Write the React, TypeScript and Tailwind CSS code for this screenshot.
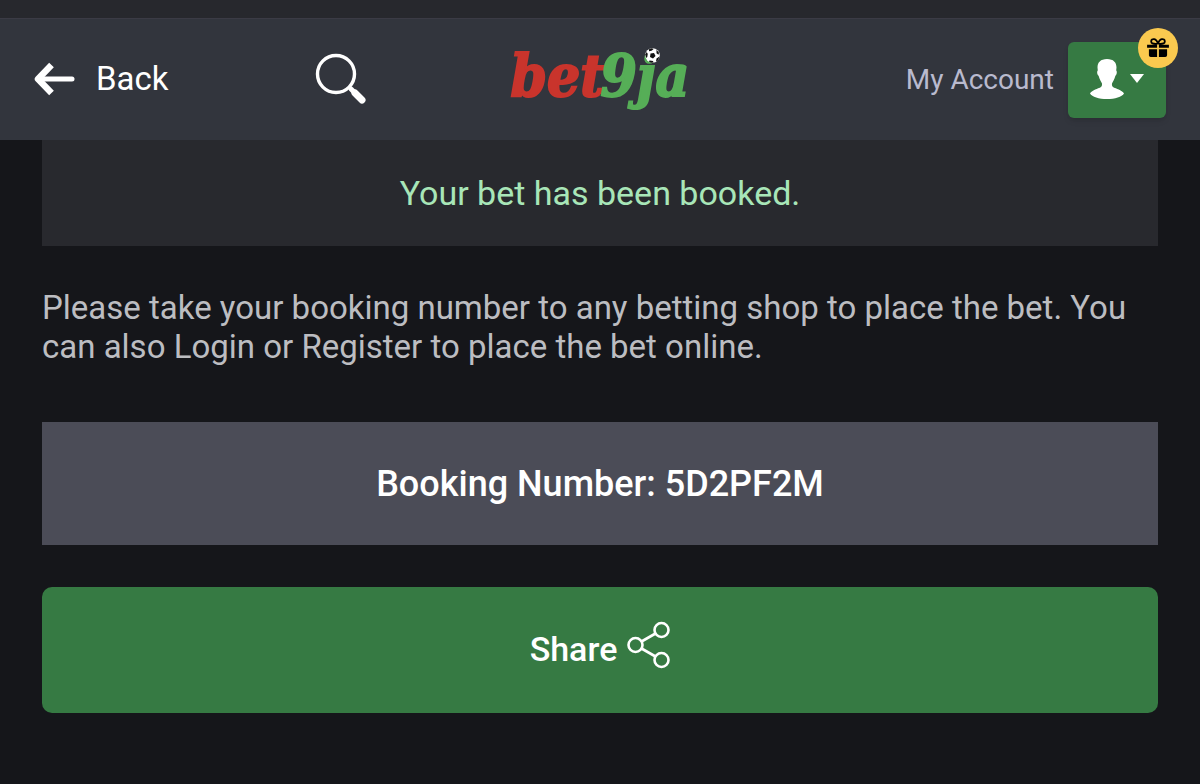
const BackArrow = () => (
  <svg width="42" height="36" viewBox="0 0 42 36" fill="none" stroke="#fff" strokeLinecap="round" strokeLinejoin="round" aria-hidden="true">
    <path d="M17.500 4 4 18l13.500 14" strokeWidth="6.500" strokeLinecap="butt" />
    <path d="M6 18h32" strokeWidth="5" />
  </svg>
)

const SearchIcon = () => (
  <svg width="52" height="52" viewBox="0 0 52 52" fill="none" stroke="#fff" strokeLinecap="round" aria-hidden="true">
    <circle cx="21" cy="21" r="18.500" strokeWidth="3.400" />
    <path d="M36 36l3 3" strokeWidth="5" />
    <path d="M40 40l7 7" strokeWidth="7" />
  </svg>
)

const Football = () => (
  <svg width="15" height="15" viewBox="0 0 30 30" aria-hidden="true">
    <circle cx="15" cy="15" r="14.500" fill="#fff" />
    <g fill="#111">
      <path d="M11 11l7-1 3 6-5 5-6-3z" />
      <path d="M8 2.500 14 .5l3 2-4 3-5 1z" />
      <path d="M23 3.500l5 6-1 4-4-3z" />
      <path d="M29 17l-3 8-4 2 1-6z" />
      <path d="M9 25l7 1 1 3-5 .5-4-2z" />
      <path d="M.5 13l3-5 2 4-1 6-2 2z" />
    </g>
  </svg>
)

const UserIcon = () => (
  <svg width="34" height="40" viewBox="0 0 34 40" fill="#fff" aria-hidden="true">
    <path d="M17 0c6.500 0 9.500 3.500 9.500 8.500l-.3 3c1 .6.8 4-.8 5.300C24.600 20.500 22.500 23 22 24.500c-.3 2 .2 3.300 2.200 4.200 4.300 1.600 8.300 3 9.800 5.800C32 38 25 40 17 40S2 38 0 34.500c1.500-2.800 5.500-4.200 9.800-5.800 2-.9 2.500-2.200 2.200-4.200-.5-1.500-2.600-4-3.400-7.700-1.600-1.300-1.800-4.700-.8-5.300l-.3-3C7.500 3.500 10.500 0 17 0z" />
  </svg>
)

const GiftIcon = () => (
  <svg width="22" height="20" viewBox="0 0 24 22" aria-hidden="true">
    <g fill="none" stroke="#000" strokeWidth="2">
      <path d="M11.500 6.500C6 7 4.500 5.500 4.500 3.800 4.500 2 6 1 7.800 1.300c2 .4 3.500 2.600 4.200 5.200" />
      <path d="M12.500 6.500c5.500.5 7-1 7-2.700 0-1.800-1.500-2.800-3.300-2.500-2 .4-3.500 2.600-4.200 5.200" />
    </g>
    <path d="M0 7.500h11v3.300H0zM13 7.500h11v3.300H13zM2 12.300h9V21H4a2 2 0 0 1-2-2zM13 12.300h9V19a2 2 0 0 1-2 2h-7z" />
  </svg>
)

const ShareIcon = () => (
  <svg width="43" height="48" viewBox="0 0 43 48" fill="none" stroke="#fff" strokeWidth="2.600" aria-hidden="true">
    <circle cx="8.500" cy="24" r="7" />
    <circle cx="34.500" cy="9" r="7" />
    <circle cx="34.500" cy="39" r="7" />
    <path d="M14.500 20.500l14-8M14.500 27.500l14 8" />
  </svg>
)

const Logo = () => (
  <a
    href="#"
    aria-label="bet9ja"
    className="relative flex pb-2 font-['DejaVu_Serif_Condensed','DejaVu_Serif',serif] text-[58px] font-bold italic leading-[60px] [-webkit-text-stroke:2px]"
  >
    <span className="text-[#c9342c]">bet</span>
    <span className="-ml-1 text-[#56ae57]">9ja</span>
    <span className="absolute right-[29px] top-0.5">
      <Football />
    </span>
  </a>
)

const Header = () => (
  <header className="grid h-[122px] grid-cols-[1fr_auto_1fr] items-center border-t border-[#3b3b45] bg-[#32353d] px-[34px]">
    <div className="flex items-center justify-between pb-0.5 pr-36">
      <button type="button" className="flex cursor-pointer items-center gap-5 text-[33px] leading-10 text-white">
        <BackArrow />
        Back
      </button>
      <button type="button" aria-label="Search" className="cursor-pointer">
        <SearchIcon />
      </button>
    </div>
    <Logo />
    <div className="flex items-center justify-end gap-[14px]">
      <span className="text-[28px] leading-10 text-[#b9bace]">My Account</span>
      <button
        type="button"
        aria-label="Account menu"
        className="relative flex h-[76px] w-[98px] cursor-pointer items-center justify-center gap-1.5 rounded-md bg-[#367a43] pb-0.5 shadow-md"
      >
        <UserIcon />
        <svg width="14" height="9" viewBox="0 0 14 9" fill="#fff" aria-hidden="true">
          <path d="M0 0h14L7 9z" />
        </svg>
        <span className="absolute -right-3 -top-3.5 flex size-10 items-center justify-center rounded-full bg-[#fac94f]">
          <GiftIcon />
        </span>
      </button>
    </div>
  </header>
)

export default function App() {
  return (
    <div className="min-h-screen bg-[#15161a] font-[Roboto,sans-serif]">
      <div className="h-[18px] bg-[#27282d]" />
      <Header />
      <main className="px-[42px] pb-[71px]">
        <p className="bg-[#28292e] py-8 text-center text-[34px] leading-[42px] text-[#a8e6b8]">
          Your bet has been booked.
        </p>
        <p className="mt-[42px] text-[33px] leading-[39px] text-[#bcbdc1]">
          Please take your booking number to any betting shop to place the bet. You can also Login or Register to place
          the bet online.
        </p>
        <p className="mt-[56px] bg-[#4b4c57] pb-[39px] pt-[41px] text-center text-[36px] font-medium leading-[43px] text-white">
          Booking Number: 5D2PF2M
        </p>
        <button
          type="button"
          className="mt-[42px] flex h-[126px] w-full cursor-pointer items-center justify-center gap-2.5 rounded-[10px] bg-[#367a43] pb-0.5 text-[34px] font-medium text-white"
        >
          Share
          <span className="pb-2">
            <ShareIcon />
          </span>
        </button>
      </main>
    </div>
  )
}
